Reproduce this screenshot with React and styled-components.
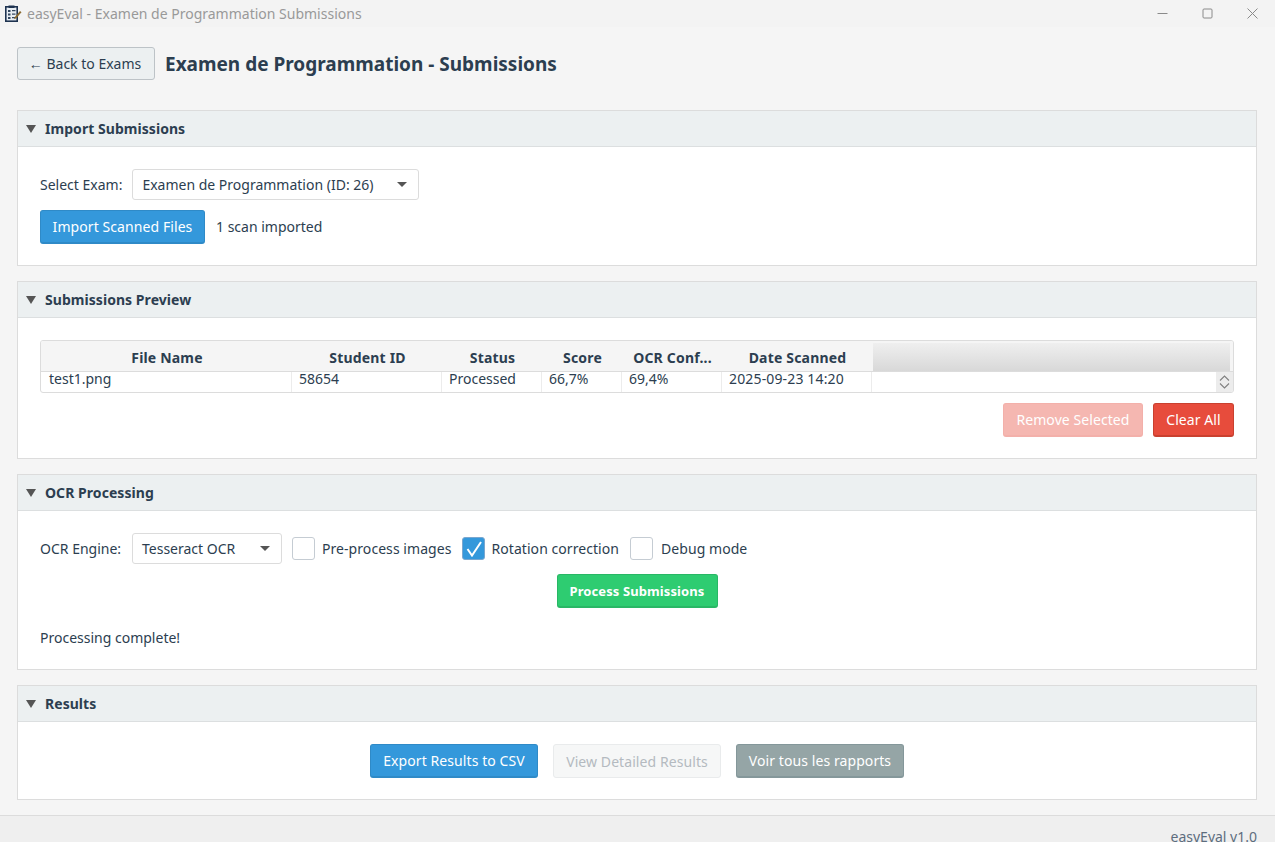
import React from 'react'
import styled, { createGlobalStyle } from 'styled-components'

const GlobalStyle = createGlobalStyle`
  html, body {
    margin: 0;
    padding: 0;
    background: #f5f5f5;
  }
  * {
    box-sizing: border-box;
  }
`

const Page = styled.div`
  width: 1275px;
  height: 842px;
  overflow: hidden;
  display: flex;
  flex-direction: column;
  background: #f5f5f5;
  font-family: "Noto Sans", "Open Sans", sans-serif;
  font-size: 14px;
  color: #2c3e50;
`

const TitleBar = styled.div`
  height: 27px;
  flex: none;
  display: flex;
  align-items: center;
  background: #f3f3f3;
  padding-left: 5px;
`

const TitleText = styled.span`
  margin-left: 5px;
  font-size: 14px;
  color: #999;
`

const WindowControls = styled.div`
  margin-left: auto;
  display: flex;
  align-items: center;
`

const WindowButton = styled.div`
  width: 45px;
  height: 27px;
  display: flex;
  align-items: center;
  justify-content: center;
`

const Content = styled.div`
  flex: 1;
  padding: 20px 18px 0 17px;
  display: flex;
  flex-direction: column;
`

const HeaderRow = styled.div`
  display: flex;
  align-items: center;
  gap: 10px;
  height: 33px;
  margin-bottom: 30px;
`

const BackButton = styled.button`
  width: 138px;
  height: 33px;
  padding: 0 2px 0 0;
  font: inherit;
  color: #2c3e50;
  background: #ecf0f1;
  border: 1px solid #bdc3c7;
  border-radius: 3px;
`

const PageTitle = styled.h1`
  margin: 0;
  font-size: 19px;
  font-weight: 700;
  color: #2c3e50;
`

const Section = styled.section`
  height: ${({ $height }) => $height}px;
  flex: none;
  margin-bottom: 15px;
  background: #fff;
  border: 1px solid #dcdcdc;
`

const SectionHeader = styled.div`
  height: 36px;
  display: flex;
  align-items: center;
  padding-left: 8px;
  gap: 9px;
  background: #ecf0f1;
  border-bottom: 1px solid #dcdfe0;
  font-weight: 700;
  font-size: 14px;
  letter-spacing: 0.05px;
  color: #2c3e50;
`

const Triangle = styled.span`
  width: 0;
  height: 0;
  border-left: 5.5px solid transparent;
  border-right: 5.5px solid transparent;
  border-top: 8px solid #555;
`

const SectionBody = styled.div`
  padding: 22px 22px 0;
  display: flex;
  flex-direction: column;
`

const Row = styled.div`
  display: flex;
  align-items: center;
  gap: ${({ $gap }) => $gap || 10}px;
  justify-content: ${({ $justify }) => $justify || 'flex-start'};
  margin-top: ${({ $top }) => $top || 0}px;
`

const Label = styled.span`
  color: #2c3e50;
  white-space: nowrap;
`

const EngineLabel = styled(Label)`
  width: 82px;
`

const ScanCount = styled(Label)`
  margin-bottom: 2px;
`

const Select = styled.div`
  width: ${({ $width }) => $width}px;
  height: 31px;
  display: flex;
  align-items: center;
  justify-content: space-between;
  padding: 0 11px 0 9px;
  background: #fff;
  border: 1px solid #dcdcdc;
  border-radius: 3px;
  color: #2c3e50;
`

const Caret = styled.span`
  width: 0;
  height: 0;
  border-left: 5px solid transparent;
  border-right: 5px solid transparent;
  border-top: 5px solid #555;
`

const Button = styled.button`
  height: 34px;
  width: ${({ $width }) => $width}px;
  padding: 0;
  font: inherit;
  letter-spacing: 0.08px;
  white-space: nowrap;
  color: #fff;
  background: ${({ $bg }) => $bg};
  border: 1px solid ${({ $border }) => $border};
  border-bottom-width: 2px;
  border-radius: 3px;
`

const MutedButton = styled(Button)`
  color: #b4bac0;
  background: #f6f7f7;
  border: 1px solid #e9ebec;
`

const GreenButton = styled(Button)`
  font-weight: 700;
  font-size: 13px;
  letter-spacing: 0.1px;
`

const Table = styled.div`
  height: 53px;
  border: 1px solid #dcdcdc;
  border-radius: 3px;
  display: flex;
  flex-direction: column;
  overflow: hidden;
`

const TableHead = styled.div`
  display: flex;
  height: 31px;
  flex: none;
  background: #f5f5f5;
  border-bottom: 1px solid #dcdcdc;
`

const HeadCell = styled.div`
  width: ${({ $width }) => $width}px;
  flex: none;
  display: flex;
  align-items: center;
  justify-content: center;
  padding: 2px 0 0 1px;
  font-weight: 700;
  letter-spacing: 0.18px;
  color: #2c3e50;
  white-space: nowrap;
`

const HeadFiller = styled.div`
  flex: 1;
  margin: 2px 3px 0 1px;
  background: linear-gradient(#efefef, #d8d8d8);
`

const TableRow = styled.div`
  flex: 1;
  display: flex;
  min-height: 0;
`

const Cell = styled.div`
  width: ${({ $width }) => $width}px;
  flex: none;
  padding-left: 7px;
  line-height: 14px;
  border-right: 1px solid #ececec;
  letter-spacing: ${({ $spacing }) => $spacing || 0}px;
  color: #2c3e50;
  white-space: nowrap;

  &:first-child {
    padding-left: 8px;
  }
`

const RowFiller = styled.div`
  flex: 1;
`

const ScrollArrows = styled.div`
  width: 17px;
  flex: none;
  background: #ececec;
  display: flex;
  align-items: center;
  justify-content: center;
`

const Checkbox = styled.span`
  width: 23px;
  height: 23px;
  flex: none;
  display: flex;
  align-items: center;
  justify-content: center;
  border: 1px solid ${({ $checked }) => ($checked ? '#7aa7cf' : '#c5ccd3')};
  border-radius: 3px;
  background: ${({ $checked }) => ($checked ? '#3498db' : '#fff')};
`

const CheckOption = styled.label`
  display: flex;
  align-items: center;
  gap: ${({ $gap }) => $gap || 7}px;
  margin-left: ${({ $left }) => $left || 0}px;
  letter-spacing: 0.06px;
  color: #2c3e50;
  white-space: nowrap;
`

const StatusLine = styled.div`
  margin-top: 20px;
  color: #2c3e50;
`

const StatusBar = styled.div`
  flex: none;
  height: 27px;
  display: flex;
  align-items: flex-start;
  justify-content: flex-end;
  padding: 12px 18px 0 0;
  background: #efefef;
  border-top: 1px solid #dcdcdc;
  color: #5d6d7e;
  line-height: 18px;
`

const columns = [
  { label: 'File Name', value: 'test1.png', width: 251 },
  { label: 'Student ID', value: '58654', width: 150 },
  { label: 'Status', value: 'Processed', width: 100 },
  { label: 'Score', value: '66,7%', width: 80 },
  { label: 'OCR Conf...', value: '69,4%', width: 100 },
  { label: 'Date Scanned', value: '2025-09-23 14:20', width: 150, spacing: 0.15 },
]

function AppIcon() {
  return (
    <svg width="17" height="17" viewBox="0 0 17 17">
      <rect x="0.8" y="1.8" width="11.4" height="14.4" fill="#e8eef4" stroke="#1e3350" strokeWidth="1.6" />
      <rect x="3.5" y="0.5" width="6" height="2.5" fill="#1e3350" />
      <path d="M3 5h2.5v2H3zM3 8.5h2.5v2H3zM3 12h2.5v2H3zM7 5h3.5v1.2H7zM7 8.5h3.5v1.2H7zM7 12h3v1.2H7z" fill="#33475f" />
      <path d="M9.5 12.5l5.5-6.5 1.5 1.2-5.5 6.3-2 .6z" fill="#8a6a2f" />
    </svg>
  )
}

function App() {
  return (
    <Page>
      <GlobalStyle />
      <TitleBar>
        <AppIcon />
        <TitleText>easyEval - Examen de Programmation Submissions</TitleText>
        <WindowControls>
          <WindowButton>
            <svg width="11" height="11" viewBox="0 0 11 11"><path d="M0.5 5.5h10" stroke="#8a8a8a" fill="none" /></svg>
          </WindowButton>
          <WindowButton>
            <svg width="11" height="11" viewBox="0 0 11 11"><rect x="1" y="1" width="9" height="9" rx="1" stroke="#8a8a8a" fill="none" /></svg>
          </WindowButton>
          <WindowButton>
            <svg width="11" height="11" viewBox="0 0 11 11"><path d="M0.5 0.5l10 10M10.5 0.5l-10 10" stroke="#8a8a8a" fill="none" /></svg>
          </WindowButton>
        </WindowControls>
      </TitleBar>

      <Content>
        <HeaderRow>
          <BackButton>← Back to Exams</BackButton>
          <PageTitle>Examen de Programmation - Submissions</PageTitle>
        </HeaderRow>

        <Section $height={156}>
          <SectionHeader><Triangle />Import Submissions</SectionHeader>
          <SectionBody>
            <Row>
              <Label>Select Exam:</Label>
              <Select $width={287}>Examen de Programmation (ID: 26)<Caret /></Select>
            </Row>
            <Row $gap={11} $top={10}>
              <Button $width={165} $bg="#3498db" $border="#2f8ac7">Import Scanned Files</Button>
              <ScanCount>1 scan imported</ScanCount>
            </Row>
          </SectionBody>
        </Section>

        <Section $height={178}>
          <SectionHeader><Triangle />Submissions Preview</SectionHeader>
          <SectionBody>
            <Table>
              <TableHead>
                {columns.map((col) => (
                  <HeadCell key={col.label} $width={col.width}>{col.label}</HeadCell>
                ))}
                <HeadFiller />
              </TableHead>
              <TableRow>
                {columns.map((col) => (
                  <Cell key={col.label} $width={col.width} $spacing={col.spacing}>{col.value}</Cell>
                ))}
                <RowFiller />
                <ScrollArrows>
                  <svg width="11" height="14" viewBox="0 0 11 14">
                    <path d="M1 5.5L5.5 1L10 5.5M1 8.5L5.5 13L10 8.5" stroke="#808080" strokeWidth="1.1" fill="none" />
                  </svg>
                </ScrollArrows>
              </TableRow>
            </Table>
            <Row $justify="flex-end" $top={10}>
              <Button $width={140} $bg="#f5b7b1" $border="#f3b0aa">Remove Selected</Button>
              <Button $width={81} $bg="#e74c3c" $border="#c9402f">Clear All</Button>
            </Row>
          </SectionBody>
        </Section>

        <Section $height={196}>
          <SectionHeader><Triangle />OCR Processing</SectionHeader>
          <SectionBody>
            <Row>
              <EngineLabel>OCR Engine:</EngineLabel>
              <Select $width={150}>Tesseract OCR<Caret /></Select>
              <CheckOption><Checkbox />Pre-process images</CheckOption>
              <CheckOption $left={1} $gap={6}>
                <Checkbox $checked>
                  <svg width="16" height="16" viewBox="0 0 16 16">
                    <path d="M1.5 8l4.5 6.5L15 1" stroke="#fff" strokeWidth="2" fill="none" />
                  </svg>
                </Checkbox>
                Rotation correction
              </CheckOption>
              <CheckOption $left={1} $gap={8}><Checkbox />Debug mode</CheckOption>
            </Row>
            <Row $justify="center" $top={10}>
              <GreenButton $width={161} $bg="#2ecc71" $border="#29b765">Process Submissions</GreenButton>
            </Row>
            <StatusLine>Processing complete!</StatusLine>
          </SectionBody>
        </Section>

        <Section $height={115}>
          <SectionHeader><Triangle />Results</SectionHeader>
          <SectionBody>
            <Row $justify="center" $gap={15}>
              <Button $width={168} $bg="#3498db" $border="#2f8ac7">Export Results to CSV</Button>
              <MutedButton $width={168}>View Detailed Results</MutedButton>
              <Button $width={168} $bg="#95a5a6" $border="#84979a">Voir tous les rapports</Button>
            </Row>
          </SectionBody>
        </Section>
      </Content>

      <StatusBar>easyEval v1.0</StatusBar>
    </Page>
  )
}

export default App
